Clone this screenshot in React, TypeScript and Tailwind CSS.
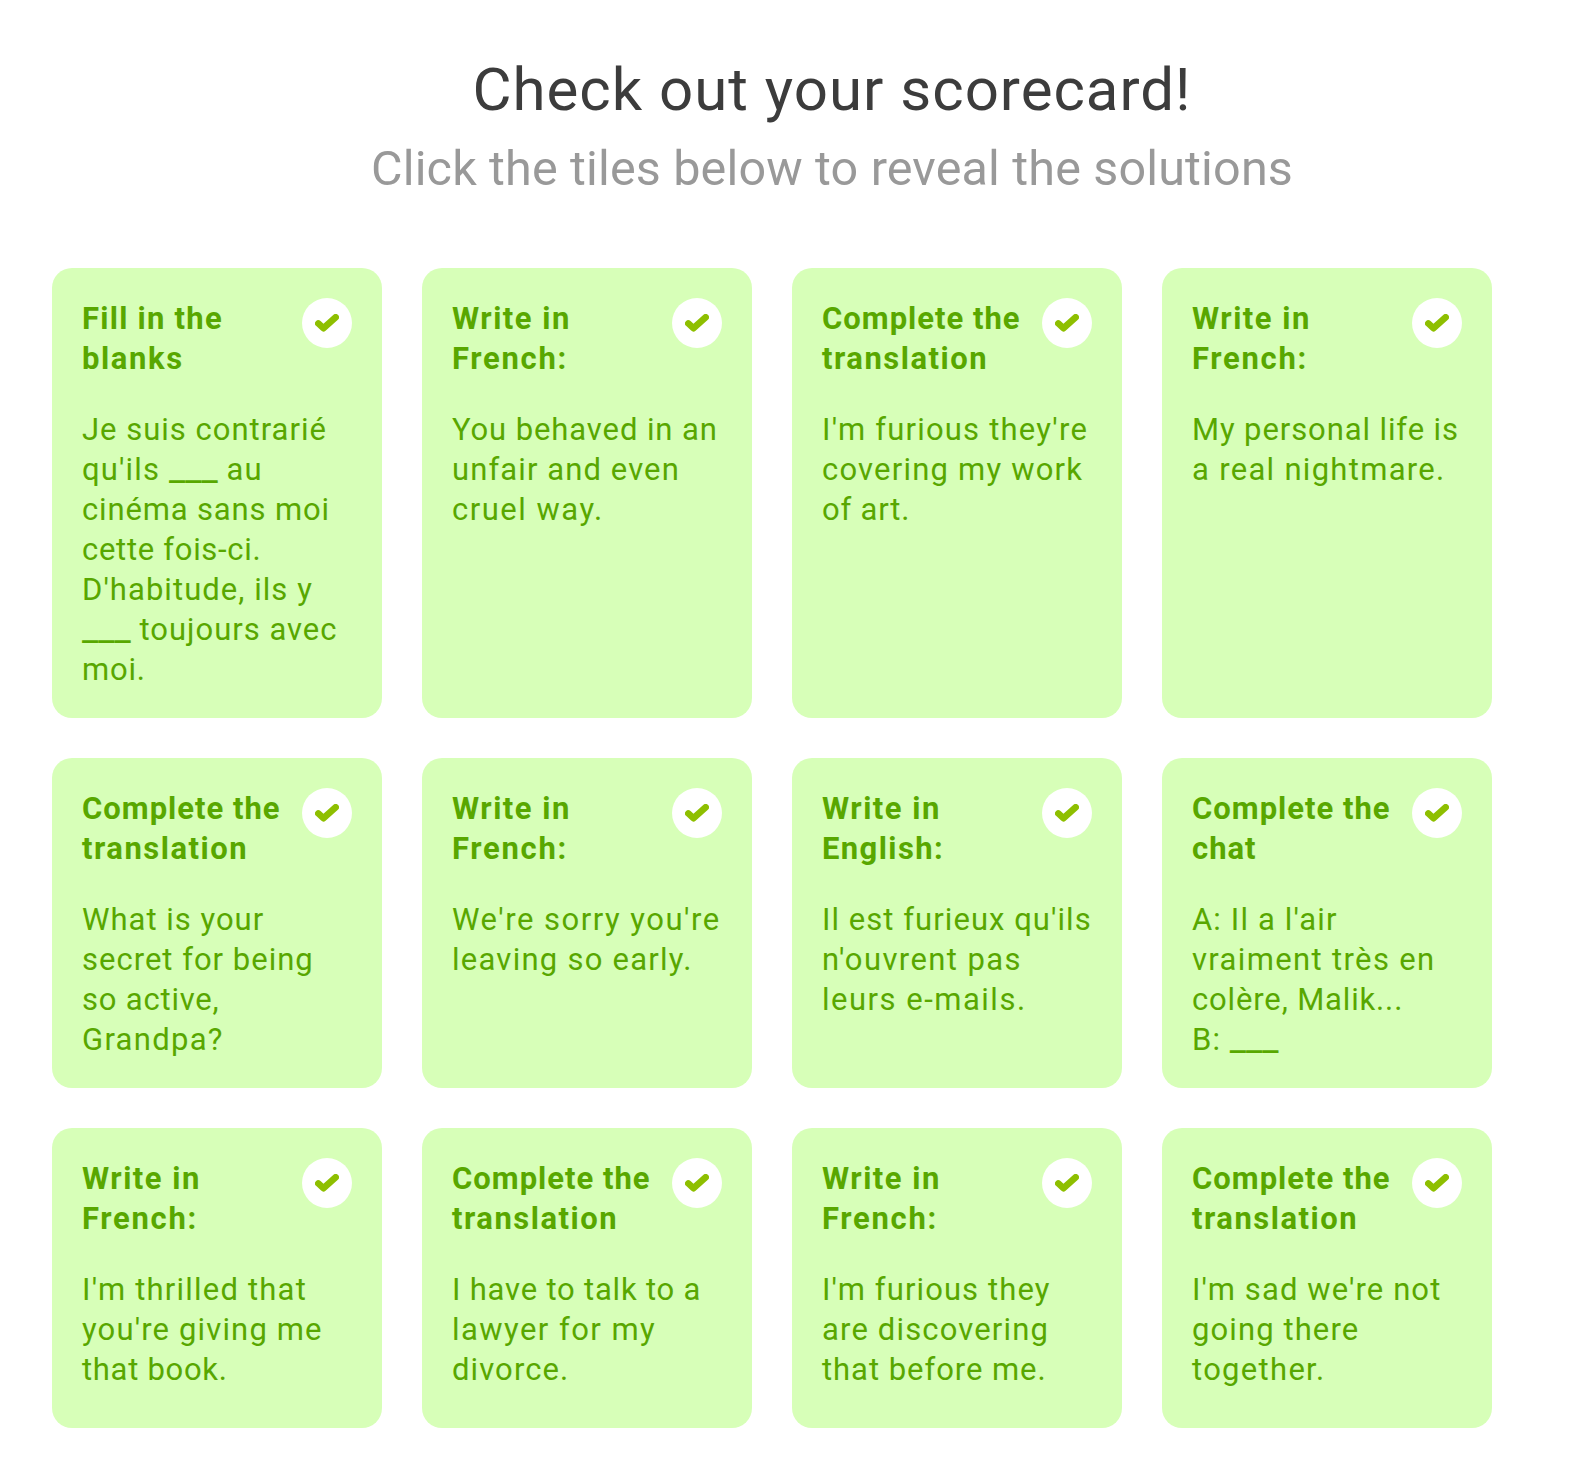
interface Line {
  text: string
  tracking: string
}

interface Tile {
  title: Line[]
  body: Line[]
}

const FILL_IN_THE_BLANKS: Line[] = [
  { text: 'Fill in the', tracking: 'tracking-[1.25px]' },
  { text: 'blanks', tracking: 'tracking-[1.6px]' },
]

const WRITE_IN_FRENCH: Line[] = [
  { text: 'Write in', tracking: 'tracking-[1.5px]' },
  { text: 'French:', tracking: 'tracking-[1.7px]' },
]

const WRITE_IN_ENGLISH: Line[] = [
  { text: 'Write in', tracking: 'tracking-[1.5px]' },
  { text: 'English:', tracking: 'tracking-[1.4px]' },
]

const COMPLETE_THE_TRANSLATION: Line[] = [
  { text: 'Complete the', tracking: 'tracking-[1px]' },
  { text: 'translation', tracking: 'tracking-[1.5px]' },
]

const COMPLETE_THE_CHAT: Line[] = [
  { text: 'Complete the', tracking: 'tracking-[1px]' },
  { text: 'chat', tracking: 'tracking-[1px]' },
]

const TILES: Tile[] = [
  {
    title: FILL_IN_THE_BLANKS,
    body: [
      { text: 'Je suis contrarié', tracking: 'tracking-[1px]' },
      { text: "qu'ils ___ au", tracking: 'tracking-[1.15px]' },
      { text: 'cinéma sans moi', tracking: 'tracking-[0.85px]' },
      { text: 'cette fois-ci.', tracking: 'tracking-[0.7px]' },
      { text: "D'habitude, ils y", tracking: 'tracking-[1.05px]' },
      { text: '___ toujours avec', tracking: 'tracking-[1px]' },
      { text: 'moi.', tracking: 'tracking-[0.8px]' },
    ],
  },
  {
    title: WRITE_IN_FRENCH,
    body: [
      { text: 'You behaved in an', tracking: 'tracking-[0.9px]' },
      { text: 'unfair and even', tracking: 'tracking-[1.1px]' },
      { text: 'cruel way.', tracking: 'tracking-[1.5px]' },
    ],
  },
  {
    title: COMPLETE_THE_TRANSLATION,
    body: [
      { text: "I'm furious they're", tracking: 'tracking-[1.2px]' },
      { text: 'covering my work', tracking: 'tracking-[1.2px]' },
      { text: 'of art.', tracking: 'tracking-[0.8px]' },
    ],
  },
  {
    title: WRITE_IN_FRENCH,
    body: [
      { text: 'My personal life is', tracking: 'tracking-[0.9px]' },
      { text: 'a real nightmare.', tracking: 'tracking-[1.3px]' },
    ],
  },
  {
    title: COMPLETE_THE_TRANSLATION,
    body: [
      { text: 'What is your', tracking: 'tracking-[1px]' },
      { text: 'secret for being', tracking: 'tracking-[1px]' },
      { text: 'so active,', tracking: 'tracking-[0.8px]' },
      { text: 'Grandpa?', tracking: 'tracking-[1.3px]' },
    ],
  },
  {
    title: WRITE_IN_FRENCH,
    body: [
      { text: "We're sorry you're", tracking: 'tracking-[1.5px]' },
      { text: 'leaving so early.', tracking: 'tracking-[1.25px]' },
    ],
  },
  {
    title: WRITE_IN_ENGLISH,
    body: [
      { text: "Il est furieux qu'ils", tracking: 'tracking-[1.05px]' },
      { text: "n'ouvrent pas", tracking: 'tracking-[1.4px]' },
      { text: 'leurs e-mails.', tracking: 'tracking-[1.5px]' },
    ],
  },
  {
    title: COMPLETE_THE_CHAT,
    body: [
      { text: "A: Il a l'air", tracking: 'tracking-[1.15px]' },
      { text: 'vraiment très en', tracking: 'tracking-[1.35px]' },
      { text: 'colère, Malik...', tracking: 'tracking-[0.85px]' },
      { text: 'B: ___', tracking: 'tracking-[1.1px]' },
    ],
  },
  {
    title: WRITE_IN_FRENCH,
    body: [
      { text: "I'm thrilled that", tracking: 'tracking-[1.2px]' },
      { text: "you're giving me", tracking: 'tracking-[1.15px]' },
      { text: 'that book.', tracking: 'tracking-[0.7px]' },
    ],
  },
  {
    title: COMPLETE_THE_TRANSLATION,
    body: [
      { text: 'I have to talk to a', tracking: 'tracking-[0.8px]' },
      { text: 'lawyer for my', tracking: 'tracking-[1.45px]' },
      { text: 'divorce.', tracking: 'tracking-[1.1px]' },
    ],
  },
  {
    title: WRITE_IN_FRENCH,
    body: [
      { text: "I'm furious they", tracking: 'tracking-[1.1px]' },
      { text: 'are discovering', tracking: 'tracking-[1.15px]' },
      { text: 'that before me.', tracking: 'tracking-[0.95px]' },
    ],
  },
  {
    title: COMPLETE_THE_TRANSLATION,
    body: [
      { text: "I'm sad we're not", tracking: 'tracking-[1.1px]' },
      { text: 'going there', tracking: 'tracking-[1.1px]' },
      { text: 'together.', tracking: 'tracking-[1.3px]' },
    ],
  },
]

// Blanks are set a little larger so the underscores join into one rule
function Lines({ lines }: { lines: Line[] }) {
  return (
    <>
      {lines.map((line) => (
        <span key={line.text} className={`block whitespace-nowrap ${line.tracking}`}>
          {line.text.split(/(___)/).map((part, i) =>
            part === '___' ? (
              <span key={i} className="text-[36px] leading-5 tracking-[0px]">
                ___
              </span>
            ) : (
              part
            )
          )}
        </span>
      ))}
    </>
  )
}

function CheckBadge() {
  return (
    <span className="flex size-[50px] shrink-0 items-center justify-center rounded-full bg-white">
      <svg width="24" height="18" viewBox="0 0 24 18" fill="none" aria-hidden="true">
        <path
          d="M3.3 9.4 8.4 14.2 20.7 3.3"
          stroke="#8ebf00"
          strokeWidth="6.6"
          strokeLinecap="round"
          strokeLinejoin="round"
        />
      </svg>
    </span>
  )
}

function ScoreTile({ tile }: { tile: Tile }) {
  return (
    <button
      type="button"
      className="flex min-h-[300px] flex-col rounded-[20px] bg-[#d7ffb8] px-[30px] pt-[30px] pb-7 text-left text-[31px] leading-10 text-[#58a700]"
    >
      <div className="flex w-full items-start justify-between">
        <h3 className="w-[220px] pt-px font-bold">
          <Lines lines={tile.title} />
        </h3>
        <CheckBadge />
      </div>
      <p className="mt-[31px]">
        <Lines lines={tile.body} />
      </p>
    </button>
  )
}

export default function App() {
  return (
    <main className="min-h-[1471px] bg-white pt-[50px] font-['Roboto',sans-serif]">
      <header className="pl-[86px] text-center">
        <h1 className="text-[60px] leading-[80px] tracking-[1px] text-[#3c3c3c]">
          Check out your scorecard!
        </h1>
        <h2 className="mt-[9px] text-[48.5px] leading-[60px] tracking-[0.16px] text-[#999999]">
          Click the tiles below to reveal the solutions
        </h2>
      </header>

      <section className="mt-[69px] ml-[52px] grid w-[1440px] grid-cols-4 gap-10">
        {TILES.map((tile, i) => (
          <ScoreTile key={i} tile={tile} />
        ))}
      </section>
    </main>
  )
}
